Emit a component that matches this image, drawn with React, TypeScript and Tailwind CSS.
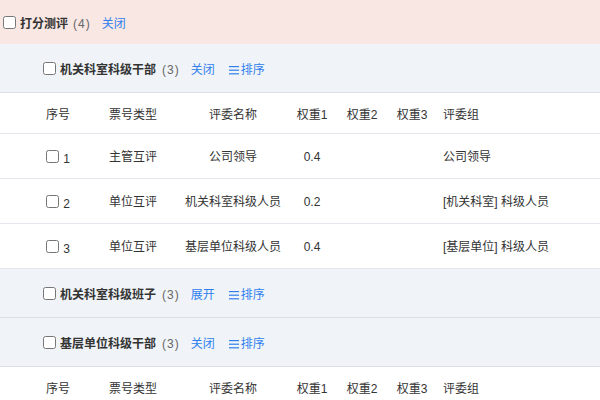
import React from "react";

const font = { fontFamily: '"Liberation Sans", "Noto Sans CJK SC", sans-serif' };

type Row = { no: number; type: string; name: string; w1: string; w2: string; w3: string; group: string };

const rows: Row[] = [
  { no: 1, type: "主管互评", name: "公司领导", w1: "0.4", w2: "", w3: "", group: "公司领导" },
  { no: 2, type: "单位互评", name: "机关科室科级人员", w1: "0.2", w2: "", w3: "", group: "[机关科室] 科级人员" },
  { no: 3, type: "单位互评", name: "基层单位科级人员", w1: "0.4", w2: "", w3: "", group: "[基层单位] 科级人员" },
];

function Box({ className = "" }: { className?: string }) {
  return <input type="checkbox" className={`m-0 h-[13px] w-[13px] shrink-0 ${className}`} />;
}

function SortIcon() {
  return (
    <svg width="11" height="9" viewBox="0 0 11 9" className="mr-[1px]">
      <rect x="0" y="0" width="10" height="1.2" fill="#2f80ed" />
      <rect x="0" y="3.6" width="10" height="1.2" fill="#2f80ed" />
      <rect x="0" y="7.2" width="10" height="1.2" fill="#2f80ed" />
    </svg>
  );
}

function GroupHeader({ title, open }: { title: string; open: boolean }) {
  return (
    <div className="h-[49px] bg-[#f0f4f8] border-b border-[#dcdfe6] flex items-center pl-[43px] text-[12px]">
      <Box />
      <div className="flex items-center mt-[4px]">
        <span className="ml-[4px] font-bold text-[#333]">{title}</span>
        <span className="ml-[6px] text-[#666] tracking-[1px]">(3)</span>
        <span className="ml-[11px] text-[#2f80ed]">{open ? "关闭" : "展开"}</span>
        <span className="ml-[14px] text-[#2f80ed] flex items-center">
          <SortIcon />
          排序
        </span>
      </div>
    </div>
  );
}

function Cols({ c, className }: { c: React.ReactNode[]; className: string }) {
  return (
    <div className={`flex items-center pl-[29px] text-[12px] text-[#333] border-b border-[#e4e7ed] ${className}`}>
      <div className="w-[58px] flex justify-center">{c[0]}</div>
      <div className="w-[92px] text-center">{c[1]}</div>
      <div className="w-[108px] text-center">{c[2]}</div>
      <div className="w-[50px] text-center">{c[3]}</div>
      <div className="w-[50px] text-center">{c[4]}</div>
      <div className="w-[50px] text-center">{c[5]}</div>
      <div className="flex-1 pl-[6px]">{c[6]}</div>
    </div>
  );
}

function HeaderRow() {
  return <Cols className="h-[41px] pt-[3px] bg-white" c={["序号", "票号类型", "评委名称", "权重1", "权重2", "权重3", "评委组"]} />;
}

export default function App() {
  return (
    <div style={font} className="w-[600px] h-[400px] overflow-hidden bg-white">
      <div className="h-[44px] bg-[#f9e7e4] flex items-center pl-[3px] text-[12px]">
        <Box />
        <div className="flex items-center mt-[4px]">
          <span className="ml-[4px] font-bold text-[#333]">打分测评</span>
          <span className="ml-[5px] text-[#666] tracking-[1px]">(4)</span>
          <span className="ml-[11px] text-[#2f80ed]">关闭</span>
        </div>
      </div>
      <GroupHeader title="机关科室科级干部" open={true} />
      <HeaderRow />
      {rows.map((r) => (
        <Cols
          key={r.no}
          className="h-[45px] pt-[2px] bg-white"
          c={[
            <span key="a" className="flex items-center">
              <Box className="-mt-[2px]" />
              <span className="ml-[4px] mt-[3px]">{r.no}</span>
            </span>,
            r.type,
            r.name,
            r.w1,
            r.w2,
            r.w3,
            r.group,
          ]}
        />
      ))}
      <GroupHeader title="机关科室科级班子" open={false} />
      <GroupHeader title="基层单位科级干部" open={true} />
      <HeaderRow />
    </div>
  );
}
